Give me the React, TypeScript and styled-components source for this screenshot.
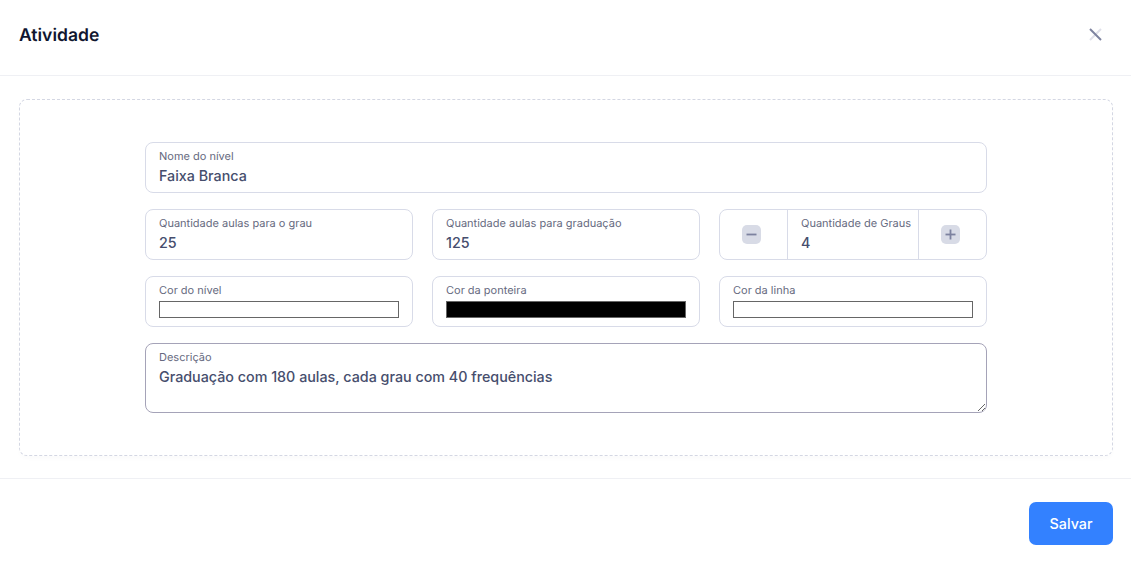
import { createGlobalStyle, styled } from "styled-components";

const GlobalStyle = createGlobalStyle`
  html, body {
    margin: 0;
    padding: 0;
    background: #fff;
    font-family: Inter, "Liberation Sans", sans-serif;
    text-rendering: geometricPrecision;
  }
  * {
    box-sizing: border-box;
  }
`;

const Page = styled.div`
  display: flex;
  flex-direction: column;
  height: 565px;
  overflow: hidden;
`;

const Header = styled.header`
  display: flex;
  align-items: center;
  justify-content: space-between;
  height: 76px;
  padding: 0 18px 4px 19px;
  border-bottom: 1px solid #eff0f4;
`;

const Title = styled.h2`
  margin: 0;
  font-size: 17.55px;
  font-weight: 600;
  color: #10162f;
`;

const CloseButton = styled.button`
  display: flex;
  align-items: center;
  justify-content: center;
  width: 36px;
  height: 36px;
  margin-bottom: 3px;
  padding: 0;
  border: 0;
  background: none;
`;

const Body = styled.main`
  padding: 23px 18px 22px 19px;
  border-bottom: 1px solid #eff0f4;
`;

const DashedCard = styled.section`
  height: 357px;
  padding: 42px 125px 0;
  border: 1px dashed #d4d7e3;
  border-radius: 8px;
  box-shadow: 0 3px 4px rgba(20, 25, 60, 0.015);
`;

const Form = styled.form`
  display: flex;
  flex-direction: column;
  gap: 16px;
`;

const Row = styled.div`
  display: grid;
  grid-template-columns: repeat(3, 1fr);
  gap: 19px;
`;

const Field = styled.div`
  position: relative;
  height: 51px;
  border: 1px solid #d8dbe8;
  border-radius: 8px;
`;

const Label = styled.label`
  position: absolute;
  top: 7px;
  left: 13px;
  font-size: 11px;
  line-height: 13px;
  white-space: nowrap;
  color: #666a80;
`;

const TextInput = styled.input`
  display: block;
  width: 100%;
  height: 100%;
  padding: 16px 13px 0;
  border: 0;
  outline: 0;
  border-radius: 8px;
  background: transparent;
  font-family: inherit;
  font-size: 14.3px;
  font-weight: 500;
  color: #464e6d;
`;

const Swatch = styled.div<{ $color: string }>`
  position: absolute;
  left: 13px;
  right: 13px;
  bottom: 8px;
  height: 17px;
  border: 1px solid #666;
  background: ${(p) => p.$color};
`;

const StepperField = styled(Field)`
  display: grid;
  grid-template-columns: 67px 1fr 67px;
`;

const StepButton = styled.button`
  display: flex;
  align-items: center;
  justify-content: center;
  padding: 0 4px 1px 0;
  border: 0;
  background: none;
`;

const StepValue = styled.div`
  position: relative;
  border-left: 1px solid #d8dbe8;
  border-right: 1px solid #d8dbe8;
`;

const TextAreaField = styled.div`
  position: relative;
  height: 70px;
`;

const TextAreaLabel = styled(Label)`
  top: 8px;
  left: 14px;
`;

const TextArea = styled.textarea`
  display: block;
  width: 100%;
  height: 100%;
  padding: 24px 13px 0;
  border: 1px solid #a5a3b8;
  border-radius: 8px;
  outline: 0;
  resize: vertical;
  font-family: inherit;
  font-size: 14.3px;
  font-weight: 500;
  line-height: 17px;
  color: #464e6d;
`;

const Footer = styled.footer`
  display: flex;
  justify-content: flex-end;
  padding: 23px 18px 0 0;
`;

const SaveButton = styled.button`
  width: 84px;
  height: 43px;
  border: 0;
  border-radius: 7px;
  background: #3381ff;
  font-family: inherit;
  font-size: 14.3px;
  font-weight: 500;
  color: #fff;
`;

const CloseIcon = () => (
  <svg width="13" height="13" viewBox="0 0 13 13" fill="none">
    <path d="M12 1 1 12" stroke="#dfe0ea" strokeWidth="2" />
    <path d="M1 1l11 11" stroke="#7d829f" strokeWidth="2" />
  </svg>
);

const StepIcon = ({ plus }: { plus?: boolean }) => (
  <svg width="19" height="19" viewBox="0 0 19 19" fill="none">
    <rect width="19" height="19" rx="5" fill="#d8dbe6" />
    <path d="M4.5 9.5h10" stroke="#7d829f" strokeWidth="1.8" />
    {plus && <path d="M9.5 4.5v10" stroke="#7d829f" strokeWidth="1.8" />}
  </svg>
);

const InputField = ({ label, value }: { label: string; value: string }) => (
  <Field>
    <Label>{label}</Label>
    <TextInput readOnly value={value} />
  </Field>
);

const ColorField = ({ label, color }: { label: string; color: string }) => (
  <Field>
    <Label>{label}</Label>
    <Swatch $color={color} />
  </Field>
);

export default function App() {
  return (
    <Page>
      <GlobalStyle />
      <Header>
        <Title>Atividade</Title>
        <CloseButton type="button" aria-label="Fechar">
          <CloseIcon />
        </CloseButton>
      </Header>
      <Body>
        <DashedCard>
          <Form>
            <InputField label="Nome do nível" value="Faixa Branca" />
            <Row>
              <InputField label="Quantidade aulas para o grau" value="25" />
              <InputField label="Quantidade aulas para graduação" value="125" />
              <StepperField>
                <StepButton type="button" aria-label="Diminuir">
                  <StepIcon />
                </StepButton>
                <StepValue>
                  <Label>Quantidade de Graus</Label>
                  <TextInput readOnly value="4" />
                </StepValue>
                <StepButton type="button" aria-label="Aumentar">
                  <StepIcon plus />
                </StepButton>
              </StepperField>
            </Row>
            <Row>
              <ColorField label="Cor do nível" color="#fff" />
              <ColorField label="Cor da ponteira" color="#000" />
              <ColorField label="Cor da linha" color="#fff" />
            </Row>
            <TextAreaField>
              <TextAreaLabel>Descrição</TextAreaLabel>
              <TextArea
                readOnly
                value="Graduação com 180 aulas, cada grau com 40 frequências"
              />
            </TextAreaField>
          </Form>
        </DashedCard>
      </Body>
      <Footer>
        <SaveButton type="button">Salvar</SaveButton>
      </Footer>
    </Page>
  );
}
